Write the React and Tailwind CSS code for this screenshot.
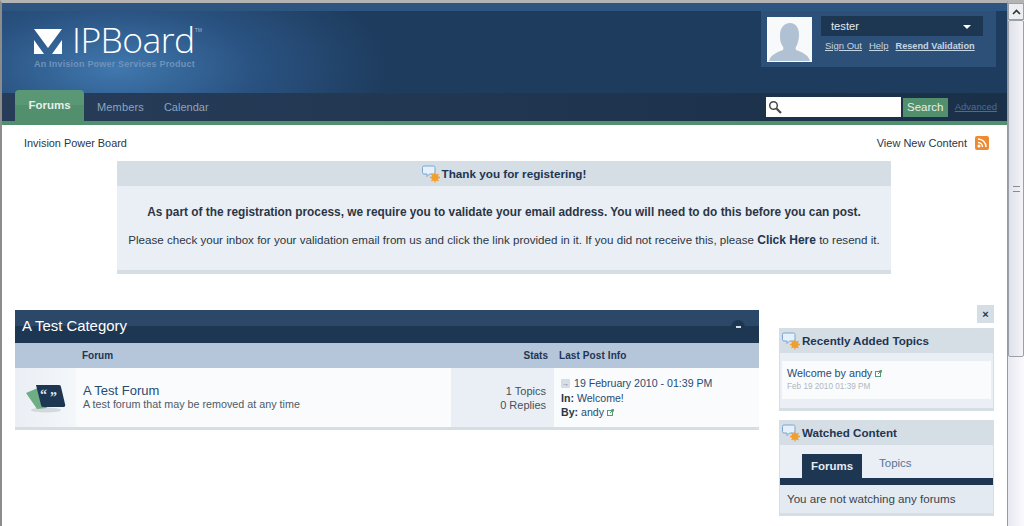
const BubbleIcon = () => (
  <svg width="19" height="18" viewBox="0 0 19 18" className="shrink-0">
    <path d="M2 1h9.500A1.500 1.500 0 0 1 13 2.500v5A1.500 1.500 0 0 1 11.500 9H7.500L5 11.500V9H2A1.500 1.500 0 0 1 .5 7.500v-5A1.500 1.500 0 0 1 2 1z" fill="#e6f0fa" stroke="#7ba6d2" />
    <circle cx="13" cy="12.500" r="3.500" fill="#f0a030" />
    <path d="M13 7.500v10M8 12.500h10M9.500 9l7 7M16.500 9l-7 7" stroke="#f0a030" strokeWidth="1.300" />
  </svg>
);

const ExternalIcon = () => (
  <svg width="7" height="7" viewBox="0 0 7 7" className="ml-[3px] inline-block" fill="none" stroke="#5a9a72">
    <rect x="0.500" y="1.500" width="5" height="5" />
    <path d="M3 4l3.500-3.500M4.500 0.500h2v2" />
  </svg>
);

function SideHeader({ children }) {
  return (
    <div className="flex h-[25px] items-center gap-[1px] bg-[#d5dde5] pl-[2px] text-[11.600px] font-bold text-[#1d3652]">
      <BubbleIcon />
      <span>{children}</span>
    </div>
  );
}

export default function App() {
  return (
    <div className="flex h-[526px] w-[1024px] overflow-hidden bg-white font-['Liberation_Sans',Arial,sans-serif] text-[12px] text-[#2a3644]">
      <div className="flex w-[1007px] shrink-0 flex-col border-l-2 border-t-[3px] border-l-[#8c8c8c] border-t-[#b4b4b4]">
        {/* branding */}
        <div className="bg-[radial-gradient(ellipse_270px_115px_at_115px_65px,#4078ae,#2a5382_50%,#1e3c5e_100%)]">
          <div className="flex h-[90px] justify-between bg-[linear-gradient(#2d557f_8px,transparent_8px)] pr-[11px] pt-[8px]">
            <div className="flex flex-col pl-[32px] pt-[9px]">
              <div className="flex h-[38px] items-start">
                <svg width="28" height="26" viewBox="0 0 28 26" className="mt-[8px]">
                  <path d="M0 1h28L14 20z" fill="#fff" />
                  <path d="M0 12l10 14H0zM28 12L18 26h10z" fill="#fff" />
                </svg>
                <span className="ml-[10px] font-['Open_Sans',sans-serif] text-[35.500px] font-light leading-[38px] tracking-[-0.55px] text-white">IPBoard</span>
                <span className="mt-[6px] text-[5px] leading-[8px] text-[#9fb6cf]">TM</span>
              </div>
              <span className="mt-[1px] text-[9px] font-bold leading-[11px] tracking-[0.2px] text-[#6f93bb]">An Invision Power Services Product</span>
            </div>
            <div className="flex h-[56px] w-[235px] gap-[9px] bg-[#2c5077] p-[6px]">
              <div className="h-[45px] w-[45px] overflow-hidden bg-[#f8f9fa]">
                <svg width="45" height="45" viewBox="0 0 45 45">
                  <path d="M2 44c2-7 9-9 14-11 1-2 0-3-1-5-2-3-2-6-2-10 0-7 4-12 10-12s9 5 9 12c0 4-1 7-2 10-1 2-2 3-1 5 5 2 12 4 14 11z" fill="#b1c1d4" />
                </svg>
              </div>
              <div className="flex flex-1 flex-col pr-[7px]">
                <div className="mt-[-1px] flex h-[20px] items-center justify-between bg-[#1d3652] pl-[10px] pr-[12px] pt-[1px] text-[11.200px] leading-none text-[#e4ebf2]">
                  <span>tester</span>
                  <span className="h-0 w-0 border-x-[4px] border-t-[4px] border-x-transparent border-t-white" />
                </div>
                <div className="ml-[4px] mt-[4px] flex gap-[7px] text-[9.500px] leading-[12px] text-[#c5d5e2] underline">
                  <span>Sign Out</span>
                  <span>Help</span>
                  <span className="text-[9.200px] font-bold">Resend Validation</span>
                </div>
              </div>
            </div>
          </div>
        </div>

        {/* primary nav */}
        <div className="flex h-[28px] items-end justify-between bg-[linear-gradient(90deg,#263c58,#1a3049)] pl-[13px] pr-[10px]">
          <div className="flex items-end">
            <div className="flex h-[31px] w-[69px] items-center justify-center rounded-t-[4px] bg-[linear-gradient(#5a9774_50%,#528f6c_50%)] pt-[1px] text-[11.500px] font-bold text-[#e6f0ea]">Forums</div>
            <div className="flex h-[28px] items-center pl-[13px] text-[11px] text-[#8ea4bd]">
              <span className="tracking-[0.15px]">Members</span>
              <span className="ml-[20px]">Calendar</span>
            </div>
          </div>
          <div className="flex h-[28px] items-center">
            <div className="flex h-[20px] w-[135px] items-center bg-white pl-[2px]">
              <svg width="14" height="14" viewBox="0 0 14 14" fill="none" stroke="#4a4a4a">
                <circle cx="5.500" cy="5.500" r="3.800" strokeWidth="1.500" />
                <path d="M8.500 8.500l4.500 4.500" strokeWidth="2.200" />
              </svg>
            </div>
            <div className="ml-[2px] flex h-[19px] w-[45px] items-center justify-center bg-[#528f6c] pt-[1px] text-[11.500px] text-[#e6f0ea]">Search</div>
            <span className="ml-[7px] text-[9.500px] text-[#4d6c92] underline">Advanced</span>
          </div>
        </div>
        <div className="h-[4px] bg-[#528f6c]" />

        {/* content */}
        <div className="flex flex-1 flex-col">
          <div className="flex items-center justify-between pl-[22px] pr-[16px] pt-[10px] leading-[16px]">
            <span className="text-[10.900px]">Invision Power Board</span>
            <div className="flex items-center gap-[8px] pr-[2px]">
              <span className="text-[11px]">View New Content</span>
              <div className="flex h-[14px] w-[14px] items-center justify-center rounded-[2px] bg-[#f08a30]">
                <svg width="10" height="10" viewBox="0 0 10 10" fill="none" stroke="#fff" strokeWidth="1.500">
                  <path d="M1 1a8 8 0 0 1 8 8M1 4.500a4.500 4.500 0 0 1 4.500 4.500" />
                  <circle cx="2" cy="8" r="0.800" fill="#fff" />
                </svg>
              </div>
            </div>
          </div>

          <div className="ml-[115px] mt-[10px] w-[774px] border-b-[4px] border-[#d5dde5] bg-[#eaeff5]">
            <div className="flex h-[25px] items-center justify-center gap-[1px] bg-[#d5dde5] text-[11.700px] font-bold text-[#1d3652]">
              <BubbleIcon />
              Thank you for registering!
            </div>
            <div className="flex h-[84px] flex-col items-center pt-[19px]">
              <p className="text-[11.850px] font-bold leading-[14px]">As part of the registration process, we require you to validate your email address. You will need to do this before you can post.</p>
              <p className="mt-[14px] text-[11.600px] leading-[14px]">Please check your inbox for your validation email from us and click the link provided in it. If you did not receive this, please <b className="text-[12px] text-[#1d3652]">Click Here</b> to resend it.</p>
            </div>
          </div>

          <div className="flex pl-[13px] pt-[31px]">
            {/* category */}
            <div className="mt-[5px] w-[744px]">
              <div className="flex h-[33px] items-center justify-between bg-[linear-gradient(#2c4869_50%,#1d3652_50%)] pl-[7px] pr-[14px]">
                <span className="text-[14.900px] text-white">A Test Category</span>
                <span className="flex h-[14px] w-[14px] items-center justify-center rounded-full bg-[#1d3652]">
                  <span className="h-[2px] w-[5px] bg-[#d5dde5]" />
                </span>
              </div>
              <div className="flex h-[25px] items-center bg-[#b5c5da] text-[10px] font-bold text-[#1d3652]">
                <span className="ml-[67px] flex-1">Forum</span>
                <span className="mr-[11px]">Stats</span>
                <span className="w-[200px] tracking-[0.1px]">Last Post Info</span>
              </div>
              <div className="flex h-[59px] bg-[#f9fbfd]">
                <div className="flex w-[61px] items-center justify-center bg-[linear-gradient(90deg,#eaeff5,#f4f7fa)]">
                  <svg width="42" height="32" viewBox="0 0 42 32">
                    <ellipse cx="21" cy="28" rx="15" ry="2.500" fill="#c9ccd0" opacity="0.7" />
                    <path d="M1 11l14-6 7 21-10 1z" fill="#6fae84" />
                    <path d="M11 3h23a2 2 0 0 1 2 2l4 17a2 2 0 0 1-2 3H18a2 2 0 0 1-2-2z" fill="#1d3652" />
                    <text x="15" y="17" fontSize="14" fontWeight="700" fill="#dfe8f0" fontFamily="Liberation Serif">“</text>
                    <text x="25" y="20" fontSize="14" fontWeight="700" fill="#dfe8f0" fontFamily="Liberation Serif">”</text>
                  </svg>
                </div>
                <div className="flex flex-1 flex-col justify-center pl-[7px]">
                  <span className="text-[13px] leading-[14px] text-[#284b72]">A Test Forum</span>
                  <span className="text-[10.750px] leading-[13px] text-[#4f5a66]">A test forum that may be removed at any time</span>
                </div>
                <div className="flex w-[103px] flex-col items-end justify-center bg-[#eaeff5] pr-[8px] text-[11px] leading-[14px] text-[#45505c]">
                  <span>1 Topics</span>
                  <span>0 Replies</span>
                </div>
                <div className="w-[205px] pl-[7px] pt-[8px] text-[10.600px] leading-[14.500px] text-[#284b72]">
                  <div className="flex items-center">
                    <span className="mr-[4px] flex h-[9px] w-[9px] items-center justify-center rounded-[1px] bg-[#d5dde5] text-[7px] leading-none text-[#6b7784]">→</span>
                    19 February 2010 - 01:39 PM
                  </div>
                  <div><b className="text-[#2a3644]">In:</b> Welcome!</div>
                  <div className="flex items-center"><b className="mr-[3px] text-[#2a3644]">By:</b> andy <ExternalIcon /></div>
                </div>
              </div>
              <div className="h-[3px] bg-[#d5dde5]" />
            </div>

            {/* sidebar */}
            <div className="ml-[20px] flex w-[215px] flex-col">
              <div className="flex justify-end">
                <span className="flex h-[18px] w-[17px] items-center justify-center bg-[#d5dde5] text-[11px] font-bold leading-none text-[#1d3652]">×</span>
              </div>
              <div className="mt-[5px] h-[83px] border-x border-b-[3px] border-[#d5dde5] bg-[#eaeff5]">
                <SideHeader>Recently Added Topics</SideHeader>
                <div className="mx-[2px] mt-[8px] h-[38px] bg-[#f9fbfd] px-[5px] pt-[5px]">
                  <div className="flex items-center text-[10.750px] leading-[14px] text-[#284b72]">Welcome by andy <ExternalIcon /></div>
                  <div className="text-[8.200px] leading-[14px] text-[#b0b7bf]">Feb 19 2010 01:39 PM</div>
                </div>
              </div>
              <div className="mt-[9px] h-[96px] border-x border-b-[3px] border-[#d5dde5] bg-[#e4eaf2]">
                <SideHeader>Watched Content</SideHeader>
                <div className="flex h-[33px] items-end bg-[#eaeff5] pl-[22px]">
                  <div className="flex h-[24px] w-[60px] items-center justify-center bg-[#1d3652] pt-[2px] text-[11.500px] font-bold text-[#e4ebf2]">Forums</div>
                  <span className="ml-[17px] h-[24px] text-[11.500px] leading-[18px] text-[#5a7397]">Topics</span>
                </div>
                <div className="h-[7px] bg-[#1d3652]" />
                <div className="flex h-[28px] items-center pl-[7px] text-[11.600px] text-[#39444f]">You are not watching any forums</div>
              </div>
            </div>
          </div>
        </div>
      </div>

      {/* browser scrollbar */}
      <div className="flex w-[17px] shrink-0 flex-col border-l border-t-[3px] border-l-[#9a9a9a] border-t-[#b4b4b4] bg-[linear-gradient(90deg,#e8e8f0,#fafafe)]">
        <div className="flex h-[17px] shrink-0 items-center justify-center border border-[#9aa0a8] bg-[#eceef2]">
          <svg width="9" height="6" viewBox="0 0 9 6" fill="none" stroke="#333" strokeWidth="1.600" className="shrink-0"><path d="M1 5l3.500-3.500L8 5" /></svg>
        </div>
        <div className="flex h-[337px] shrink-0 items-center justify-center rounded-[2px] border border-[#9aa0a8] bg-[linear-gradient(90deg,#dfe0ea,#f4f4f8)]">
          <div className="h-[6px] w-[7px] border-y border-[#8a8a94]" />
        </div>
      </div>
    </div>
  );
}
